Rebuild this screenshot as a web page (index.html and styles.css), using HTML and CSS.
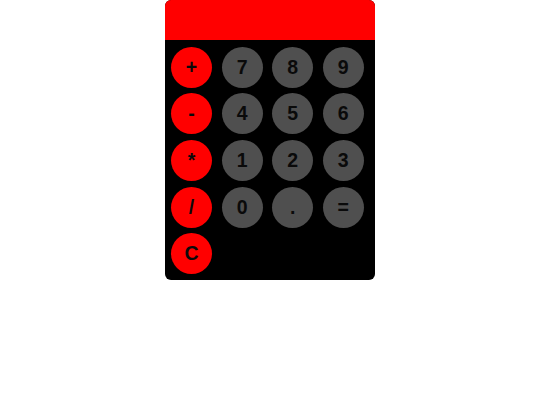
FILE: index.html
```html
<!DOCTYPE html>
<html>
<head>
<meta charset="utf-8">
<link rel="stylesheet" href="styles.css">
</head>
<body>
<div class="calc">
  <div class="display"></div>
  <div class="keys">
    <button class="key op">+</button>
    <button class="key num">7</button>
    <button class="key num">8</button>
    <button class="key num">9</button>
    <button class="key op">-</button>
    <button class="key num">4</button>
    <button class="key num">5</button>
    <button class="key num">6</button>
    <button class="key op">*</button>
    <button class="key num">1</button>
    <button class="key num">2</button>
    <button class="key num">3</button>
    <button class="key op">/</button>
    <button class="key num">0</button>
    <button class="key num">.</button>
    <button class="key num">=</button>
    <button class="key op">C</button>
  </div>
</div>
</body>
</html>
```
FILE: styles.css
```css
html, body {
  margin: 0;
  padding: 0;
  background: #fff;
}
.calc {
  width: 210px;
  margin: 0 auto;
  background: #000;
  border-radius: 6px;
  overflow: hidden;
}
.display {
  height: 40px;
  background: #ff0000;
}
.keys {
  display: grid;
  grid-template-columns: repeat(4, 41px);
  column-gap: 9.6px;
  row-gap: 5.67px;
  padding: 6.67px 0 5.5px 6px;
}
.key {
  width: 41px;
  height: 41px;
  border: none;
  border-radius: 50%;
  padding: 0;
  margin: 0;
  font-family: "Liberation Sans", Arial, sans-serif;
  font-weight: bold;
  font-size: 19.5px;
  color: #0a0a0a;
  display: flex;
  align-items: center;
  justify-content: center;
}
.op {
  background: #ff0000;
}
.num {
  background: #4f4f4f;
}
```
